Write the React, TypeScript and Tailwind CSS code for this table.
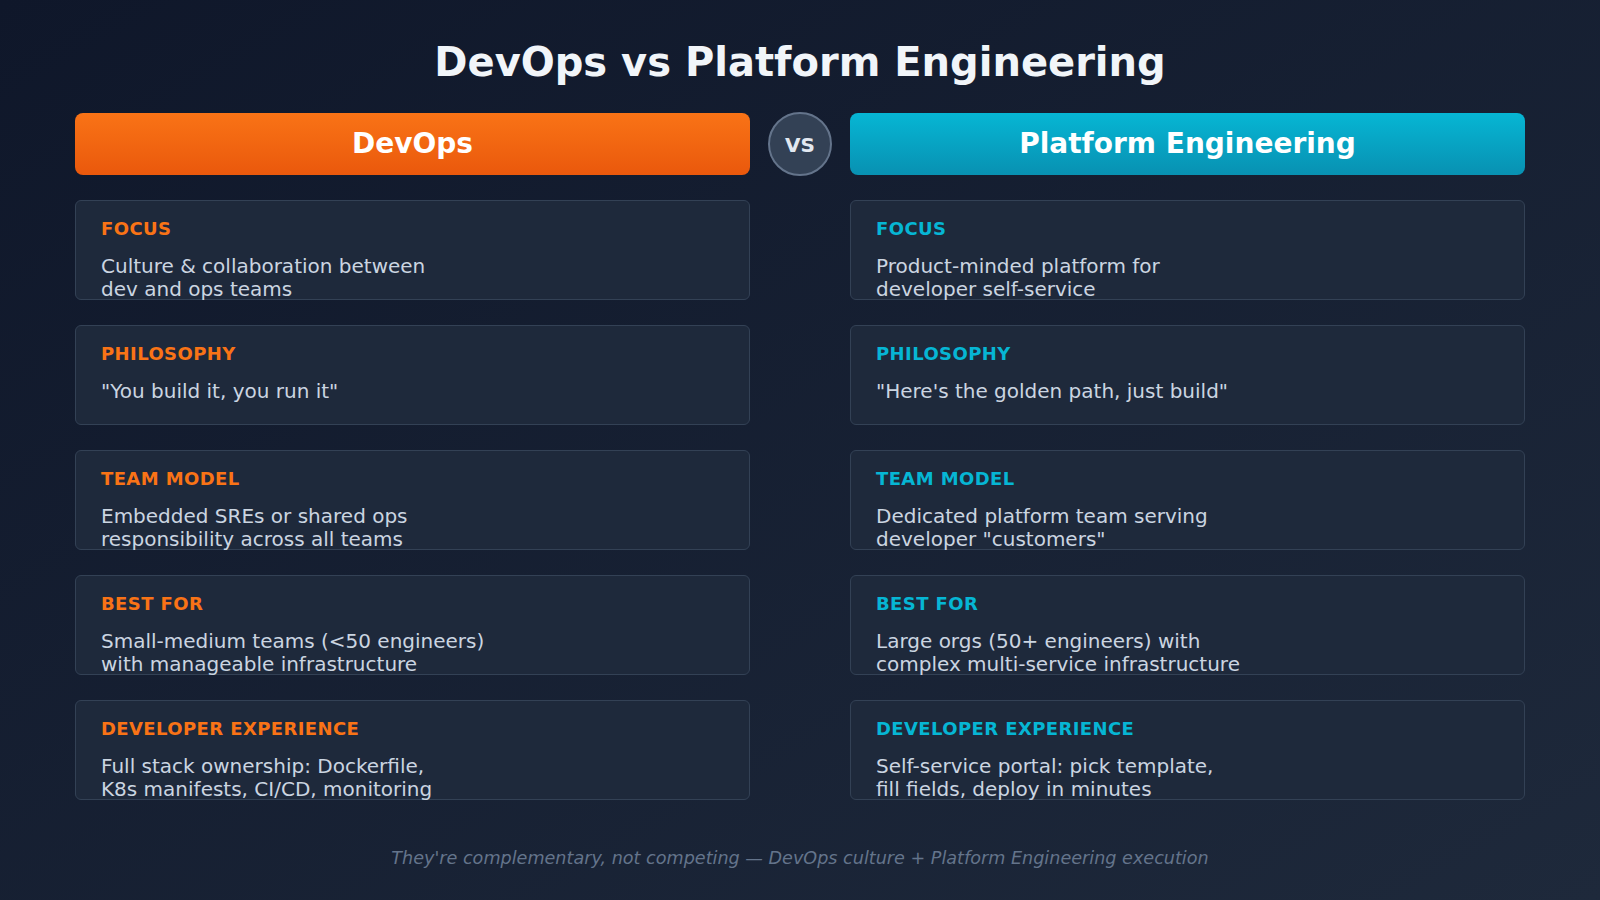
const rows = [
  {
    label: 'FOCUS',
    devops: ['Culture & collaboration between', 'dev and ops teams'],
    platform: ['Product-minded platform for', 'developer self-service'],
  },
  {
    label: 'PHILOSOPHY',
    devops: ['"You build it, you run it"'],
    platform: ['"Here\'s the golden path, just build"'],
  },
  {
    label: 'TEAM MODEL',
    devops: ['Embedded SREs or shared ops', 'responsibility across all teams'],
    platform: ['Dedicated platform team serving', 'developer "customers"'],
  },
  {
    label: 'BEST FOR',
    devops: ['Small-medium teams (<50 engineers)', 'with manageable infrastructure'],
    platform: ['Large orgs (50+ engineers) with', 'complex multi-service infrastructure'],
  },
  {
    label: 'DEVELOPER EXPERIENCE',
    devops: ['Full stack ownership: Dockerfile,', 'K8s manifests, CI/CD, monitoring'],
    platform: ['Self-service portal: pick template,', 'fill fields, deploy in minutes'],
  },
];

function Card({ label, lines, accent }: { label: string; lines: string[]; accent: 'orange' | 'cyan' }) {
  return (
    <div className="h-[100px] rounded-[6px] border border-[#334155] bg-[#1e293b] px-[25px] pt-[17px]">
      <div
        className={
          'text-[18px] font-bold leading-[22px] tracking-[0.4px] ' +
          (accent === 'orange' ? 'text-[#f97316]' : 'text-[#06b6d4]')
        }
      >
        {label}
      </div>
      <div className="mt-[15px] text-[20px] leading-[23px] text-[#cbd5e1]">
        {lines.map((l) => (
          <div key={l} className="whitespace-pre">{l}</div>
        ))}
      </div>
    </div>
  );
}

export default function App() {
  return (
    <div
      className="w-[1600px] h-[900px] overflow-hidden bg-gradient-to-br from-[#0f172a] to-[#1e293b]"
      style={{ fontFamily: '"DejaVu Sans", Verdana, sans-serif' }}
    >
      {/* Title */}
      <h1 className="pt-[38px] text-center text-[40px] font-bold leading-[48px] text-[#f1f5f9]">
        DevOps vs Platform Engineering
      </h1>

      {/* Column headers */}
      <div className="mt-[26px] grid grid-cols-[675px_100px_675px] justify-center items-center h-[64px]">
        <div className="flex h-[62px] items-center justify-center rounded-[8px] bg-gradient-to-b from-[#f97316] to-[#ea580c] text-[28px] font-bold text-white">
          DevOps
        </div>
        <div className="flex justify-center">
          <div className="flex h-[64px] w-[64px] items-center justify-center rounded-full border-2 border-[#64748b] bg-[#334155] pt-[2px] text-[20px] font-bold text-[#e2e8f0]">
            VS
          </div>
        </div>
        <div className="flex h-[62px] items-center justify-center rounded-[8px] bg-gradient-to-b from-[#06b6d4] to-[#0891b2] text-[28px] font-bold text-white">
          Platform Engineering
        </div>
      </div>

      {/* Comparison rows */}
      <div className="mt-[24px] grid grid-cols-[675px_100px_675px] justify-center gap-y-[25px]">
        {rows.map((r) => (
          <div key={r.label} className="contents">
            <Card label={r.label} lines={r.devops} accent="orange" />
            <div />
            <Card label={r.label} lines={r.platform} accent="cyan" />
          </div>
        ))}
      </div>

      {/* Footer */}
      <p className="mt-[46px] text-center text-[17.6px] italic leading-[24px] text-[#64748b]">
        They're complementary, not competing — DevOps culture + Platform Engineering execution
      </p>
    </div>
  );
}
